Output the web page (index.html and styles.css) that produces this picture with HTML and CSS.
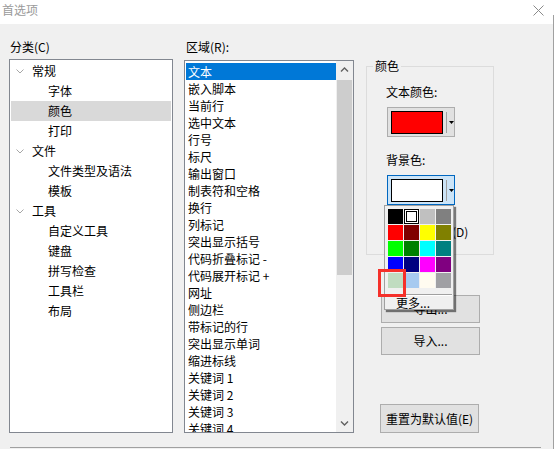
FILE: index.html
```html
<!DOCTYPE html>
<html lang="zh-CN">
<head>
<meta charset="utf-8">
<title>首选项</title>
<link rel="stylesheet" href="styles.css">
</head>
<body>
<div class="titlebar">
  <span class="title">首选项</span>
  <svg class="close" width="11" height="11" viewBox="0 0 11 11"><path d="M0.5 0.5 L10.5 10.5 M10.5 0.5 L0.5 10.5" stroke="#8a8a8a" stroke-width="1" fill="none"/></svg>
</div>
<div class="main">
  <div class="col col-cat">
    <div class="label">分类(C)</div>
    <div class="tree">
      <div class="tree-row l1"><svg class="chev" width="8" height="5" viewBox="0 0 8 5"><path d="M0.5 0.5 L4 4 L7.5 0.5" stroke="#a6a6a6" fill="none"/></svg><span>常规</span></div>
      <div class="tree-row l2">字体</div>
      <div class="tree-row l2 sel">颜色</div>
      <div class="tree-row l2">打印</div>
      <div class="tree-row l1"><svg class="chev" width="8" height="5" viewBox="0 0 8 5"><path d="M0.5 0.5 L4 4 L7.5 0.5" stroke="#a6a6a6" fill="none"/></svg><span>文件</span></div>
      <div class="tree-row l2">文件类型及语法</div>
      <div class="tree-row l2">模板</div>
      <div class="tree-row l1"><svg class="chev" width="8" height="5" viewBox="0 0 8 5"><path d="M0.5 0.5 L4 4 L7.5 0.5" stroke="#a6a6a6" fill="none"/></svg><span>工具</span></div>
      <div class="tree-row l2">自定义工具</div>
      <div class="tree-row l2">键盘</div>
      <div class="tree-row l2">拼写检查</div>
      <div class="tree-row l2">工具栏</div>
      <div class="tree-row l2">布局</div>
    </div>
  </div>
  <div class="col col-area">
    <div class="label label-area">区域(R):</div>
    <div class="listbox">
      <div class="items">
        <div class="item sel">文本</div>
        <div class="item">嵌入脚本</div>
        <div class="item">当前行</div>
        <div class="item">选中文本</div>
        <div class="item">行号</div>
        <div class="item">标尺</div>
        <div class="item">输出窗口</div>
        <div class="item">制表符和空格</div>
        <div class="item">换行</div>
        <div class="item">列标记</div>
        <div class="item">突出显示括号</div>
        <div class="item">代码折叠标记 -</div>
        <div class="item">代码展开标记 +</div>
        <div class="item">网址</div>
        <div class="item">侧边栏</div>
        <div class="item">带标记的行</div>
        <div class="item">突出显示单词</div>
        <div class="item">缩进标线</div>
        <div class="item">关键词 1</div>
        <div class="item">关键词 2</div>
        <div class="item">关键词 3</div>
        <div class="item">关键词 4</div>
      </div>
      <div class="scrollbar">
        <div class="sb-btn"><svg width="9" height="5" viewBox="0 0 9 5"><path d="M1 4.5 L4.5 1 L8 4.5" stroke="#606060" stroke-width="1.4" fill="none"/></svg></div>
        <div class="thumb"></div>
        <div class="track"></div>
        <div class="sb-btn"><svg width="9" height="5" viewBox="0 0 9 5"><path d="M1 0.5 L4.5 4 L8 0.5" stroke="#606060" stroke-width="1.4" fill="none"/></svg></div>
      </div>
    </div>
  </div>
  <div class="col col-right">
    <div class="group">
      <div class="legend">颜色</div>
      <div class="glabel">文本颜色:</div>
      <div class="cbtn">
        <span class="swatch swatch-red"></span>
        <span class="csep"></span>
        <svg class="tri" width="5" height="3" viewBox="0 0 5 3"><path d="M0 0 H5 L2.5 3 Z" fill="#000"/></svg>
      </div>
      <div class="glabel glabel-bg">背景色:</div>
      <div class="cwrap">
        <div class="cbtn cbtn-active">
          <span class="swatch swatch-white"></span>
          <span class="csep"></span>
          <svg class="tri" width="5" height="3" viewBox="0 0 5 3"><path d="M0 0 H5 L2.5 3 Z" fill="#000"/></svg>
        </div>
        <div class="popup">
          <div class="grid">
            <span class="cell c-000000"></span>
            <span class="cell cell-sel"></span>
            <span class="cell c-c0c0c0"></span>
            <span class="cell c-808080"></span>
            <span class="cell c-ff0000"></span>
            <span class="cell c-800000"></span>
            <span class="cell c-ffff00"></span>
            <span class="cell c-808000"></span>
            <span class="cell c-00ff00"></span>
            <span class="cell c-008000"></span>
            <span class="cell c-00ffff"></span>
            <span class="cell c-008080"></span>
            <span class="cell c-0000ff"></span>
            <span class="cell c-000080"></span>
            <span class="cell c-ff00ff"></span>
            <span class="cell c-800080"></span>
            <span class="cell c-c0dcc0"></span>
            <span class="cell c-a6caf0"></span>
            <span class="cell c-fffbf0"></span>
            <span class="cell c-a0a0a4"></span>
          </div>
          <div class="psep"></div>
          <div class="more">更多...</div>
          <div class="mark"></div>
        </div>
      </div>
      <div class="drow">使用默认值(D)</div>
    </div>
    <div class="btn btn-export">导出...</div>
    <div class="btn btn-import">导入...</div>
    <div class="btn btn-reset">重置为默认值(E)</div>
  </div>
</div>
<div class="footer-line"></div>
<div class="edge"></div>
</body>
</html>
```
FILE: styles.css
```css
html, body {
  margin: 0;
  padding: 0;
}
body {
  width: 554px;
  height: 449px;
  overflow: hidden;
  position: relative;
  background: #f0f0f0;
  color: #000;
  font-family: "Noto Sans CJK SC", "Microsoft YaHei", sans-serif;
  font-size: 12px;
  line-height: 16px;
}
.titlebar {
  height: 24px;
  background: #fff;
  display: flex;
  justify-content: space-between;
  align-items: flex-start;
  padding: 2px 10px 0 2px;
  box-sizing: border-box;
}
.title {
  color: #9a9a9a;
  line-height: 16px;
}
.close {
  margin-top: 3px;
}
.main {
  display: flex;
  padding: 15px 0 0 9px;
}
.col {
  display: flex;
  flex-direction: column;
}
.col-cat {
  width: 164px;
}
.label {
  line-height: 16px;
  padding-left: 1px;
  margin-bottom: 4px;
}
.label-area {
  padding-left: 2px;
  margin-bottom: 5px;
}
.tree {
  height: 374px;
  box-sizing: border-box;
  border: 1px solid #828790;
  background: #fff;
  padding-top: 1px;
}
.tree-row {
  height: 20px;
  line-height: 20px;
  margin: 0 1px;
  display: flex;
  align-items: center;
  white-space: nowrap;
}
.tree-row.l1 {
  padding-left: 5px;
}
.tree-row.l1 .chev {
  margin-right: 8px;
}
.tree-row.l2 {
  padding-left: 37px;
}
.tree-row.sel {
  background: #d9d9d9;
}
.col-area {
  width: 170px;
  margin-left: 11px;
}
.listbox {
  height: 373px;
  box-sizing: border-box;
  border: 1px solid #828790;
  background: #fff;
  display: flex;
}
.items {
  flex: 1;
  padding: 2px 0 0 1px;
  overflow: hidden;
}
.item {
  height: 17px;
  line-height: 17px;
  padding-left: 2px;
  white-space: nowrap;
}
.item.sel {
  background: #0078d7;
  color: #fff;
}
.scrollbar {
  width: 17px;
  background: #f0f0f0;
  display: flex;
  flex-direction: column;
}
.sb-btn {
  height: 17px;
  display: flex;
  align-items: center;
  justify-content: center;
}
.thumb {
  height: 195px;
  margin: 2px 1px 0 1px;
  background: #cdcdcd;
}
.track {
  flex: 1;
}
.col-right {
  width: 128px;
  margin-left: 12px;
}
.group {
  margin-top: 27px;
  border: 1px solid #dcdcdc;
  padding: 0 0 14px 19px;
}
.legend {
  width: fit-content;
  margin: -9px 0 0 -13px;
  padding: 0 2px;
  background: #f0f0f0;
  line-height: 16px;
}
.glabel {
  margin-top: 10px;
  line-height: 16px;
}
.glabel-bg {
  margin-top: 15px;
}
.cbtn {
  margin: 7px 0 0 1px;
  width: 68px;
  height: 30px;
  box-sizing: border-box;
  border: 1px solid #adadad;
  background: #e1e1e1;
  display: flex;
  align-items: center;
  padding-left: 3px;
}
.cbtn-active {
  margin-top: 0;
  border-color: #0067c0;
  background: #cce4f7;
}
.cwrap {
  position: relative;
  margin-top: 7px;
  width: 68px;
}
.swatch {
  width: 52px;
  height: 23px;
  box-sizing: border-box;
  border: 1px solid #000;
}
.swatch-red {
  background: #ff0000;
}
.swatch-white {
  background: #fff;
}
.csep {
  width: 1px;
  height: 21px;
  margin-left: 3px;
  background: #a0a0a0;
}
.tri {
  margin-left: 2px;
  margin-top: 1px;
}
.drow {
  margin-top: 19px;
  padding-left: 6px;
  line-height: 16px;
  white-space: nowrap;
}
.popup {
  position: absolute;
  left: -2px;
  top: 100%;
  z-index: 2;
  width: 70px;
  height: 105px;
  box-sizing: border-box;
  border: 1px solid #a0a0a0;
  background: #f0f0f0;
  padding: 3px 0 0 3px;
  box-shadow: 2px 2px 1px rgba(0, 0, 0, 0.5);
}
.grid {
  display: grid;
  grid-template-columns: repeat(4, 15px);
  grid-auto-rows: 15px;
  gap: 1px;
}
.cell {
  display: block;
}
.cell-sel {
  background: #fff;
  border: 1px solid #000;
  box-shadow: inset 0 0 0 1px #fff, inset 0 0 0 2px #000;
}
.c-000000 { background: #000000; }
.c-c0c0c0 { background: #c0c0c0; }
.c-808080 { background: #808080; }
.c-ff0000 { background: #ff0000; }
.c-800000 { background: #800000; }
.c-ffff00 { background: #ffff00; }
.c-808000 { background: #808000; }
.c-00ff00 { background: #00ff00; }
.c-008000 { background: #008000; }
.c-00ffff { background: #00ffff; }
.c-008080 { background: #008080; }
.c-0000ff { background: #0000ff; }
.c-000080 { background: #000080; }
.c-ff00ff { background: #ff00ff; }
.c-800080 { background: #800080; }
.c-c0dcc0 { background: #c0dcc0; }
.c-a6caf0 { background: #a6caf0; }
.c-fffbf0 { background: #fffbf0; }
.c-a0a0a4 { background: #a0a0a4; }
.psep {
  margin: 6px 0 0 -1px;
  width: 65px;
  border-top: 1px solid #a0a0a0;
  border-bottom: 1px solid #fff;
}
.more {
  padding-left: 8px;
  line-height: 13px;
}
.mark {
  position: absolute;
  left: -7px;
  top: 63px;
  width: 28px;
  height: 28px;
  box-sizing: border-box;
  border: 3px solid #f5302a;
}
.btn {
  width: 99px;
  height: 28px;
  box-sizing: border-box;
  margin-left: 15px;
  border: 1px solid #adadad;
  background: #e1e1e1;
  display: flex;
  align-items: center;
  justify-content: center;
  white-space: nowrap;
}
.btn-export {
  margin-top: 40px;
}
.btn-import {
  margin-top: 4px;
}
.btn-reset {
  margin-top: auto;
  margin-left: 14px;
  height: 29px;
}
.footer-line {
  margin: 14px 0 0 10px;
  width: 531px;
  height: 1px;
  background: #a0a0a0;
}
.edge {
  position: absolute;
  right: 0;
  top: 15px;
  bottom: 0;
  width: 1px;
  background: #a0a0a0;
}
```
